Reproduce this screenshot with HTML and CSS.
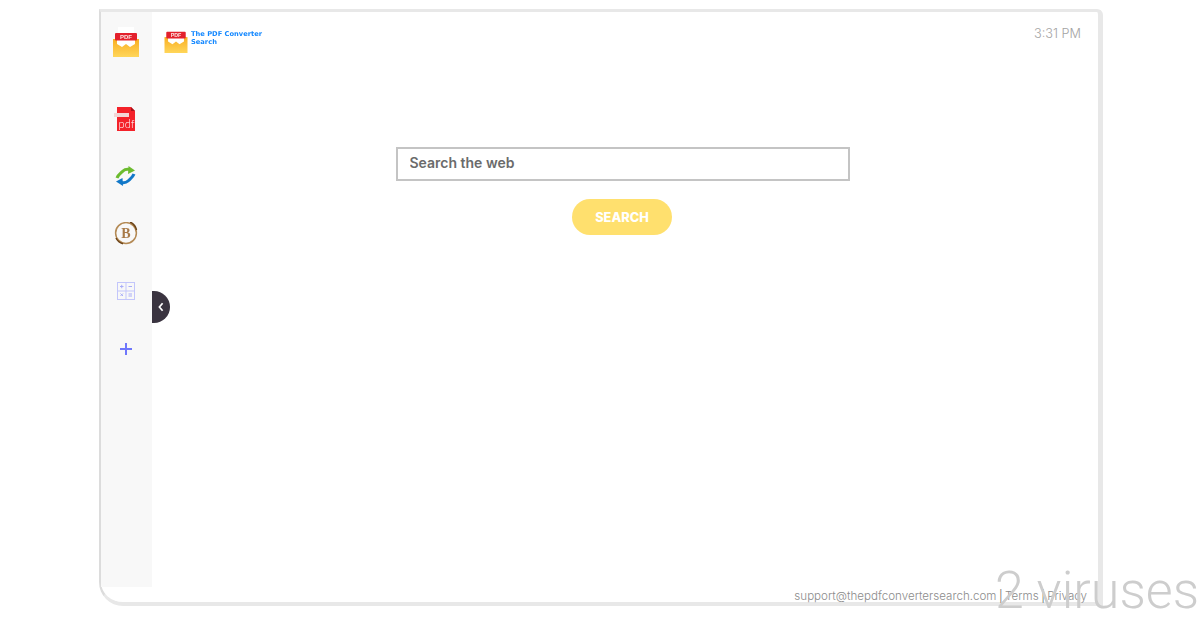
FILE: index.html
```html
<!DOCTYPE html>
<html lang="en">
<head>
  <meta charset="UTF-8">
  <meta name="viewport" content="width=device-width, initial-scale=1.0">
  <title>The PDF Converter Search</title>
  <link rel="stylesheet" href="styles.css">
</head>
<body>
  <div class="frame">
    <aside class="sidebar">
      <svg class="side-logo" width="26" height="30" viewBox="0 0 26 30">
        <defs>
          <linearGradient id="env-fill" x1="0" y1="0" x2="0" y2="1">
            <stop offset="0" stop-color="#f9ae22"/>
            <stop offset="1" stop-color="#ffd65a"/>
          </linearGradient>
        </defs>
        <rect x="5" y="0" width="16" height="8" fill="#fff"/>
        <path d="M0 12 H26 V30 H0 Z" fill="url(#env-fill)"/>
        <path d="M4 13 H22 V17 L17 20 L13 17 L9 20 L4 17 Z" fill="#fff"/>
        <rect x="2" y="6" width="22" height="7.5" rx="1" fill="#e3202c"/>
        <text x="13" y="12" class="env-text">PDF</text>
      </svg>
      <ul class="apps">
        <li>
          <svg width="24" height="24" viewBox="0 0 24 24">
            <path d="M3 0 H17 L21 4 V24 H3 Z" fill="#f4222a"/>
            <path d="M17 0 L21 4 H17 Z" fill="#a81219"/>
            <rect x="0" y="6" width="15" height="4" fill="#f3d6d6"/>
            <text x="12.5" y="20.5" class="pdf-text">pdf</text>
          </svg>
        </li>
        <li>
          <svg width="21" height="20" viewBox="0 0 21 20">
            <path d="M2 12 C3 9 6 7 8 5 C10 3 12 3 15 3.5" fill="none" stroke="#6cbb2f" stroke-width="3"/>
            <path d="M13.5 0 L20 4.5 L13 8 Z" fill="#6cbb2f"/>
            <path d="M19 8 C18 11 15 13 13 15 C11 17 9 17 6 16.5" fill="none" stroke="#1278c8" stroke-width="3"/>
            <path d="M7.5 12 L1 15.5 L8 20 Z" fill="#1278c8"/>
          </svg>
        </li>
        <li>
          <svg width="24" height="24" viewBox="0 1 24 24">
            <circle cx="12" cy="12" r="10.4" fill="none" stroke="#b48a55" stroke-width="1.5"/>
            <path d="M16 1 A11 11 0 0 1 22.5 9 M2 17 A11 11 0 0 0 9 22.8" fill="none" stroke="#6b4317" stroke-width="1.5"/>
            <text x="12" y="17" class="brand-text">B</text>
          </svg>
        </li>
        <li>
          <svg width="18" height="18" viewBox="0 0 18 18">
            <g fill="none" stroke="#c3c6fb" stroke-width="1">
              <rect x="0.5" y="0.5" width="17" height="17"/>
              <path d="M9 0 V18 M0 9 H18"/>
            </g>
            <path d="M3 4.5 H6.5 M4.75 2.75 V6.25 M11.5 4.5 H15 M3.5 11.5 L6 14 M6 11.5 L3.5 14 M11.5 12 H15 M11.5 14 H15" stroke="#a9adf8" stroke-width="1" fill="none"/>
          </svg>
        </li>
        <li>
          <svg width="12" height="12" viewBox="0 0 12 12">
            <path d="M6 0 V12 M0 6 H12" stroke="#6f77fb" stroke-width="2"/>
          </svg>
        </li>
      </ul>
    </aside>

    <button class="collapse">
      <svg width="6" height="10" viewBox="0 0 6 10">
        <path d="M4.6 1.2 L1.4 5 L4.6 8.8" fill="none" stroke="#fff" stroke-width="1.7"/>
      </svg>
    </button>

    <main class="content">
      <header class="topbar">
        <div class="brand">
          <svg width="24" height="23" viewBox="0 4 26 26">
            <rect x="5" y="4" width="16" height="4" fill="#fff"/>
            <path d="M0 12 H26 V30 H0 Z" fill="url(#env-fill)"/>
            <path d="M4 13 H22 V17 L17 20 L13 17 L9 20 L4 17 Z" fill="#fff"/>
            <rect x="2" y="6" width="22" height="7.5" rx="1" fill="#e3202c"/>
            <text x="13" y="12" class="env-text">PDF</text>
          </svg>
          <span class="brand-name">The PDF Converter<br>Search</span>
        </div>
        <span class="clock">3:31 PM</span>
      </header>

      <form class="search">
        <input class="search-input" type="text" placeholder="Search the web">
        <button class="search-btn" type="button">SEARCH</button>
      </form>

      <footer class="footer">
        <a>support@thepdfconvertersearch.com</a>
        <span class="sep">|</span>
        <a>Terms</a>
        <span class="sep">|</span>
        <a>Privacy</a>
      </footer>
    </main>
  </div>

  <div class="watermark">2 viruses</div>
</body>
</html>
```

FILE: styles.css
```css
* {
  box-sizing: border-box;
}

body {
  margin: 0;
  height: 620px;
  overflow: hidden;
  position: relative;
  background-color: #fff;
  font-family: Inter, 'Open Sans', sans-serif;
}

.env-text {
  font: bold 6px 'Liberation Sans', sans-serif;
  fill: #fbe3e3;
  text-anchor: middle;
}

.pdf-text {
  font: 300 11px Lato, sans-serif;
  fill: #fff;
  text-anchor: middle;
}

.brand-text {
  font: bold 14px 'Liberation Serif', serif;
  fill: #a87a48;
  text-anchor: middle;
}

.frame {
  position: relative;
  display: flex;
  width: 1004px;
  height: 597px;
  margin: 9px 0 0 99px;
  background: #fff;
  border-style: solid;
  border-color: #e8e8e8;
  border-width: 3px 5px 4px 2px;
  border-left-color: #dcdcdc;
  border-radius: 0 6px 0 24px;
}

.sidebar {
  width: 51px;
  height: 575px;
  flex-shrink: 0;
  padding: 15px 2px 0 0;
  display: flex;
  flex-direction: column;
  align-items: center;
  background-color: #f8f8f8;
}

.sidebar svg,
.brand svg {
  filter: blur(0.35px);
}

.side-logo {
  display: block;
}

.apps {
  list-style: none;
  margin: 33px 0 0;
  padding: 0;
}

.apps li {
  height: 57.5px;
  display: flex;
  align-items: center;
  justify-content: center;
}

.collapse {
  position: absolute;
  left: 51px;
  top: 279px;
  width: 18px;
  height: 32px;
  padding: 0;
  border: none;
  border-radius: 0 16px 16px 0;
  background-color: #3a3440;
  display: flex;
  align-items: center;
  justify-content: center;
}

.content {
  flex: 1;
  display: flex;
  flex-direction: column;
  padding-right: 5px;
}

.topbar {
  display: flex;
  justify-content: space-between;
  padding: 18px 12px 0 12px;
  height: 135px;
}

.brand {
  display: flex;
  align-items: flex-start;
  gap: 3px;
  height: 24px;
}

.brand-name {
  font: bold 6.7px/8px 'DejaVu Sans', sans-serif;
  color: #1488ff;
  padding-top: 0;
  filter: blur(0.25px);
}

.clock {
  font-size: 12.7px;
  font-weight: 300;
  line-height: 16px;
  color: #a3a3a3;
  margin-top: -4px;
}

.search {
  width: 454px;
  margin: 0 auto;
  display: flex;
  flex-direction: column;
  align-items: center;
}

.search-input {
  width: 100%;
  height: 34px;
  padding: 0 12px 3px;
  border: 2px solid #c4c4c4;
  font-family: inherit;
  font-size: 14px;
  font-weight: 600;
  outline: none;
}

.search-input::placeholder {
  color: #6b6b6b;
  opacity: 1;
}

.search-btn {
  width: 100px;
  height: 36px;
  margin: 18px 2px 0 0;
  padding: 0 0 0 1px;
  border: none;
  border-radius: 18px;
  background-color: #ffe06e;
  color: #fff;
  font-family: inherit;
  font-size: 12.8px;
  font-weight: 800;
}

.footer {
  margin-top: auto;
  padding: 0 6px 0 0;
  display: flex;
  justify-content: flex-end;
  align-items: center;
  gap: 2.5px;
  font-size: 11.6px;
  line-height: 14px;
  font-weight: 300;
  color: #8c8c8c;
  transform: translateY(1px);
}

.sep {
  color: #555;
}

.watermark {
  position: absolute;
  right: 1px;
  top: 560px;
  font-family: Roboto, sans-serif;
  font-size: 52px;
  font-weight: 300;
  line-height: 62px;
  color: #cdcdcd;
  white-space: nowrap;
}
```
